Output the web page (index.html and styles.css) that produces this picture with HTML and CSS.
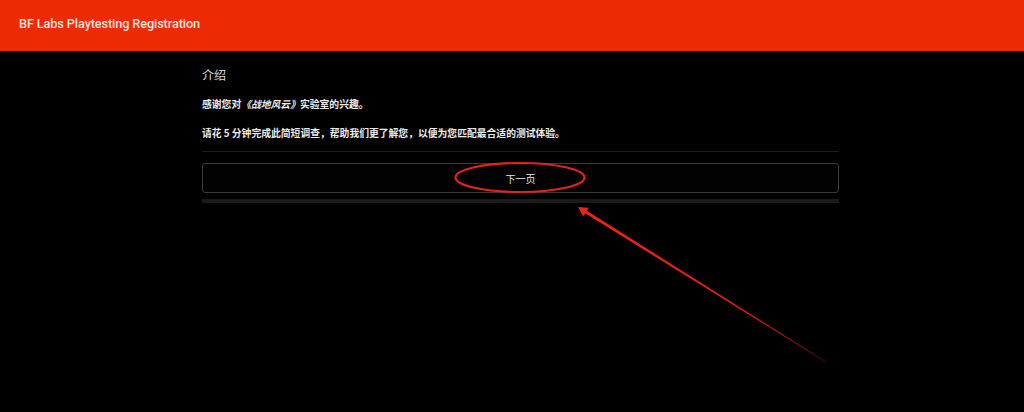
FILE: index.html
```html
<!DOCTYPE html>
<html lang="zh-CN">
<head>
<meta charset="utf-8">
<title>BF Labs Playtesting Registration</title>
<link rel="stylesheet" href="styles.css">
</head>
<body>
<header class="topbar">
  <span class="brand">BF Labs Playtesting Registration</span>
</header>
<main class="form">
  <h2 class="section-title">介绍</h2>
  <p class="lead">感谢您对<em>《战地风云》</em>实验室的兴趣。</p>
  <p class="lead">请花 5 分钟完成此简短调查，帮助我们更了解您，以便为您匹配最合适的测试体验。</p>
  <div class="divider"></div>
  <button class="next-btn" type="button">下一页</button>
  <div class="progress"></div>
</main>
<svg class="annotation" width="1024" height="412" viewBox="0 0 1024 412" xmlns="http://www.w3.org/2000/svg">
  <defs>
    <linearGradient id="fade" gradientUnits="userSpaceOnUse" x1="580" y1="208" x2="826" y2="362">
      <stop offset="0" stop-color="#f2221a"/>
      <stop offset="0.7" stop-color="#e01a14"/>
      <stop offset="1" stop-color="#6a0c08"/>
    </linearGradient>
  </defs>
  <ellipse cx="520" cy="177.5" rx="64.5" ry="14.5" fill="none" stroke="#e4241c" stroke-width="2.2"/>
  <polygon points="586.4,210.5 826.2,361.7 825.8,362.3 584.8,213.1" fill="url(#fade)"/>
  <polygon points="578,207 588.6,207.8 583.2,216.4" fill="#f2221a"/>
</svg>
</body>
</html>
```

FILE: styles.css
```css
html, body {
  margin: 0;
  padding: 0;
  background: #000;
}
body {
  width: 1024px;
  height: 412px;
  overflow: hidden;
  position: relative;
  font-family: "Roboto", "Noto Sans CJK SC", sans-serif;
  color: #e6e6e6;
}
.topbar {
  height: 51px;
  background: #ed2a04;
  display: flex;
  align-items: center;
  padding-left: 19px;
}
.brand {
  font-family: "Roboto", sans-serif;
  font-weight: 500;
  font-size: 12.7px;
  color: #fde6de;
  letter-spacing: -0.1px;
  margin-top: -5px;
}
.form {
  width: 637px;
  margin-left: 202px;
  display: flex;
  flex-direction: column;
}
.section-title {
  margin: 16px 0 0;
  font-family: "Noto Sans CJK SC", sans-serif;
  font-weight: 400;
  font-size: 12px;
  line-height: 16px;
  color: #dcdcdc;
}
.lead {
  margin: 13px 0 0;
  font-family: "Noto Sans CJK SC", sans-serif;
  font-weight: 700;
  font-size: 9.8px;
  line-height: 16px;
  color: #ececec;
}
.lead + .lead {
  margin-top: 13px;
}
.lead em {
  font-style: italic;
}
.divider {
  margin-top: 10px;
  height: 1px;
  background: #1c1c1c;
}
.next-btn {
  margin-top: 11px;
  height: 30px;
  border: 1px solid #3a3a3a;
  border-radius: 3px;
  background: #020202;
  color: #e6e6e6;
  font-family: "Noto Sans CJK SC", sans-serif;
  font-size: 10px;
  padding: 0;
}
.progress {
  margin-top: 6px;
  height: 4px;
  background: #1a1a1a;
}
.annotation {
  position: absolute;
  left: 0;
  top: 0;
  pointer-events: none;
}
```
